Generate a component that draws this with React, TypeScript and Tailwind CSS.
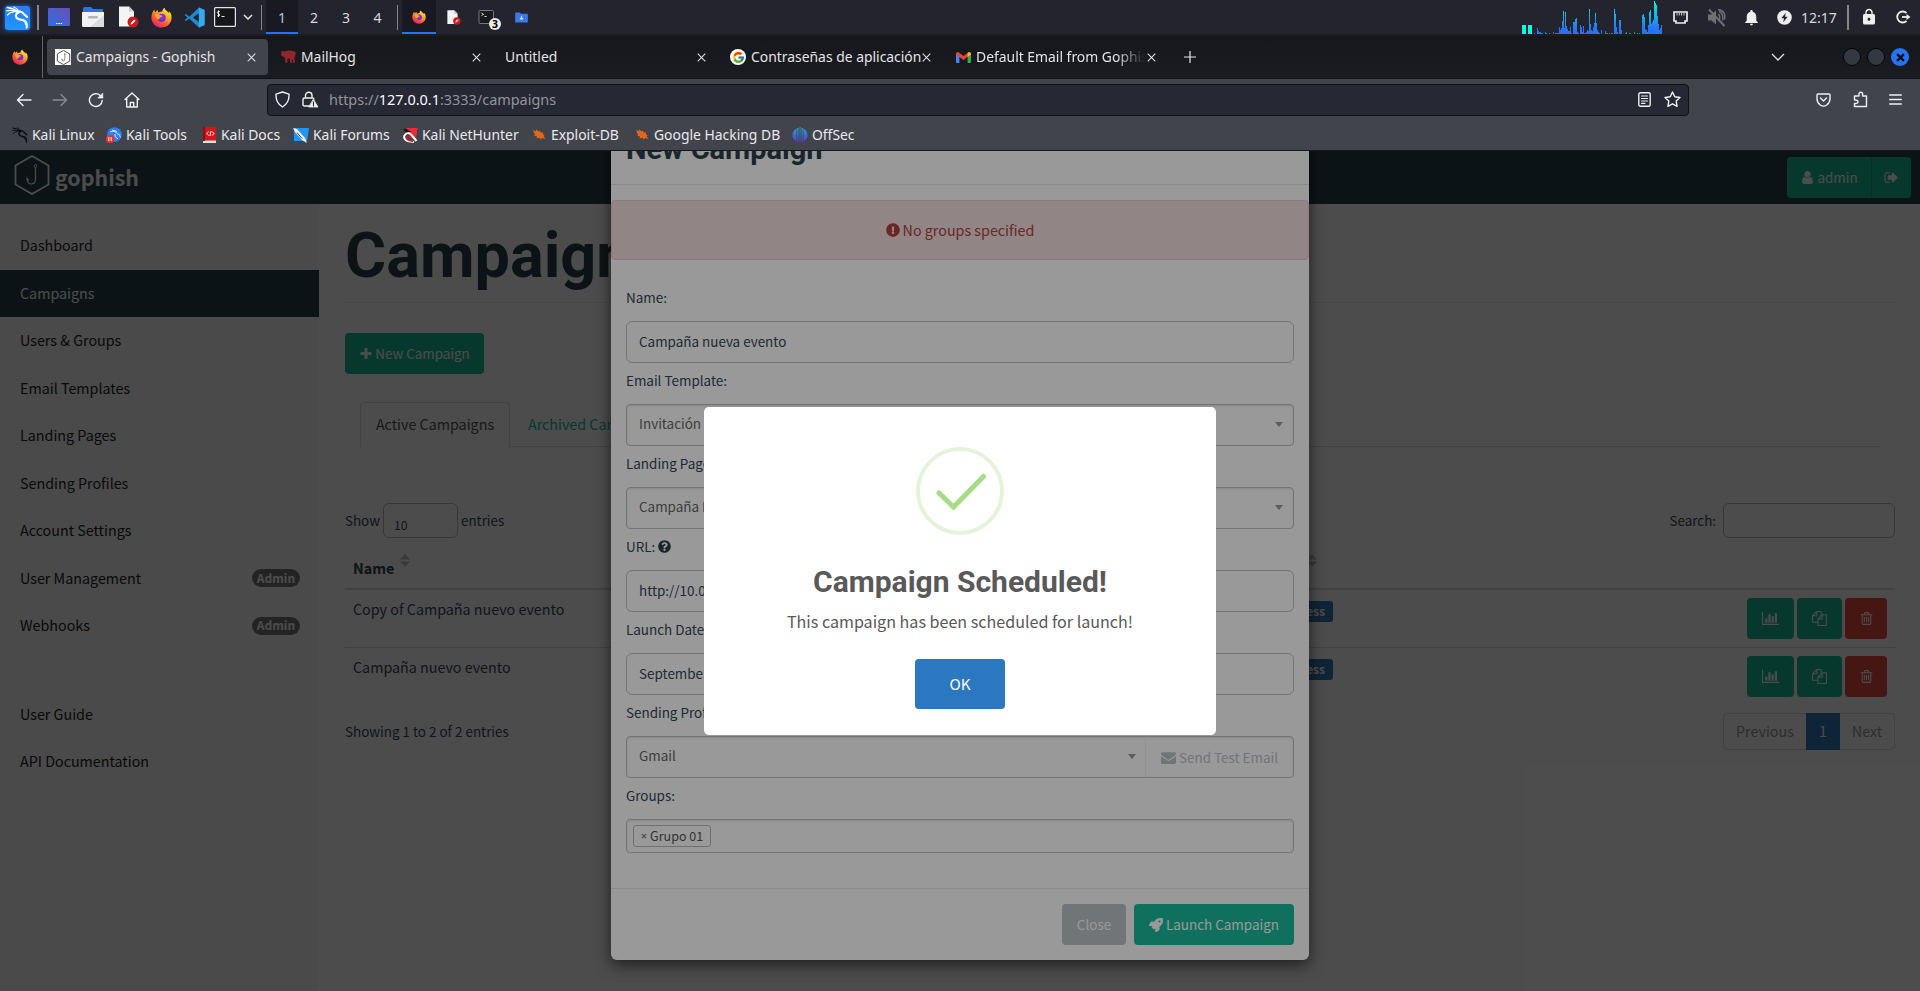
import type { ReactNode } from "react";
import { FcGoogle } from "react-icons/fc";
import { FaExclamationCircle, FaQuestionCircle, FaRocket } from "react-icons/fa";
import { MdNotifications, MdLock } from "react-icons/md";

const icons = {
  plus: "M1600 736v192q0 40-28 68t-68 28h-416v416q0 40-28 68t-68 28h-192q-40 0-68-28t-28-68v-416h-416q-40 0-68-28t-28-68v-192q0-40 28-68t68-28h416v-416q0-40 28-68t68-28h192q40 0 68 28t28 68v416h416q40 0 68 28t28 68z",
  chart: "M640 896v512h-256v-512h256zm384-512v1024h-256v-1024h256zm1024 1152v128h-2048v-1536h128v1408h1920zm-640-896v768h-256v-768h256zm384-384v1152h-256v-1152h256z",
  trash: "M704 736v576q0 14-9 23t-23 9h-64q-14 0-23-9t-9-23v-576q0-14 9-23t23-9h64q14 0 23 9t9 23zm256 0v576q0 14-9 23t-23 9h-64q-14 0-23-9t-9-23v-576q0-14 9-23t23-9h64q14 0 23 9t9 23zm256 0v576q0 14-9 23t-23 9h-64q-14 0-23-9t-9-23v-576q0-14 9-23t23-9h64q14 0 23 9t9 23zm128 724v-948h-896v948q0 22 7 40.5t14.5 27 10.5 8.5h832q3 0 10.5-8.5t14.5-27 7-40.5zm-672-1076h448l-48-117q-7-9-17-11h-317q-10 2-17 11zm928 32v64q0 14-9 23t-23 9h-96v948q0 83-47 143.5t-113 60.5h-832q-66 0-113-58.5t-47-141.5v-952h-96q-14 0-23-9t-9-23v-64q0-14 9-23t23-9h309l70-167q15-37 54-63t79-26h320q40 0 79 26t54 63l70 167h309q14 0 23 9t9 23z",
  files: "M1696 384q40 0 68 28t28 68v1216q0 40-28 68t-68 28h-960q-40 0-68-28t-28-68v-288h-544q-40 0-68-28t-28-68v-672q0-40 20-88t48-76l408-408q28-28 76-48t88-20h416q40 0 68 28t28 68v328q68-40 128-40h416zm-544 213l-299 299h299v-299zm-640-384l-299 299h299v-299zm196 647l316-316v-416h-384v416q0 40-28 68t-68 28h-416v640h512v-256q0-40 20-88t48-76zm956 804v-1152h-384v416q0 40-28 68t-68 28h-416v640h896z",
  signOut: "M704 1440q0 4 1 20t.5 26.5-3 23.5-10 19.5-20.5 6.5h-320q-119 0-203.5-84.5t-84.5-203.5v-704q0-119 84.5-203.5t203.5-84.5h320q13 0 22.5 9.5t9.5 22.5q0 4 1 20t.5 26.5-3 23.5-10 19.5-20.5 6.5h-320q-66 0-113 47t-47 113v704q0 66 47 113t113 47h312l11.5 1 11.5 3 8 5.5 7 9 2 13.5zm928-544q0 26-19 45l-544 544q-19 19-45 19t-45-19-19-45v-288h-448q-26 0-45-19t-19-45v-384q0-26 19-45t45-19h448v-288q0-26 19-45t45-19 45 19l544 544q19 19 19 45z",
  user: "M1536 1399q0 109-62.5 187t-150.5 78h-854q-88 0-150.5-78t-62.5-187q0-85 8.5-160.5t31.5-152 58.5-131 94-89 134.5-34.5q131 128 313 128t313-128q76 0 134.5 34.5t94 89 58.5 131 31.5 152 8.5 160.5zm-256-887q0 159-112.5 271.5t-271.5 112.5-271.5-112.5-112.5-271.5 112.5-271.5 271.5-112.5 271.5 112.5 112.5 271.5z",
  envelope: "M1792 710v794q0 66-47 113t-113 47h-1472q-66 0-113-47t-47-113v-794q44 49 101 87 362 246 497 345 57 42 92.5 65.5t94.5 48 110 24.5h2q51 0 110-24.5t94.5-48 92.5-65.5q170-123 498-345 57-39 100-87zm0-294q0 79-49 151t-122 123q-376 261-468 325-10 7-42.5 31t-54 38.5-52 32.5-57.5 27-50 9h-2q-23 0-50-9t-57.5-27-52-32.5-54-38.5-42.5-31q-91-64-262-182.5t-205-142.5q-62-42-117-115.5t-55-136.5q0-78 41.5-130t118.5-52h1472q65 0 112.5 47t47.5 113z",
};

function Glyph({ d, size, wide }: { d: string; size: number; wide?: boolean }) {
  return (
    <svg width={wide ? (size * 2048) / 1792 : size} height={size} viewBox={wide ? "0 0 2048 1792" : "0 0 1792 1792"} fill="currentColor" className="shrink-0">
      <path d={d} />
    </svg>
  );
}

function Dragon({ size, color }: { size: number; color: string }) {
  return (
    <svg width={size} height={size} viewBox="0 0 24 24" fill="none" stroke={color} strokeLinecap="round" strokeLinejoin="round" className="shrink-0">
      <path d="M1.500 1.500Q7 2 12 5.500" strokeWidth="1.500" />
      <path d="M0.800 5Q6 3.800 12 6" strokeWidth="1.300" />
      <path d="M1.500 9.500Q5 5.600 11 6" strokeWidth="1.300" />
      <path d="M8 1Q11 2 13 5" strokeWidth="1.200" />
      <path d="M11 5.500Q17 5 19.500 9.500L22 11.500" strokeWidth="2" />
      <path d="M19 9Q21 8.500 22.300 11.500" strokeWidth="1.200" />
      <path d="M13.500 6.500Q9.500 8 10.500 11.500 11.800 14 16 14.300 20.800 15 21.500 18.500 21.800 20.500 21.500 22.500" strokeWidth="2.100" />
      <path d="M17 14.500Q20.500 16 20.500 19" strokeWidth="1.500" />
    </svg>
  );
}

function Firefox({ size }: { size: number }) {
  return (
    <svg width={size} height={size} viewBox="0 0 24 24">
      <defs>
        <linearGradient id="fxBody" x1="0.85" y1="0" x2="0.2" y2="1">
          <stop offset="0" stopColor="#fff14f" />
          <stop offset="0.35" stopColor="#ffae26" />
          <stop offset="0.65" stopColor="#ff5a36" />
          <stop offset="1" stopColor="#e8186f" />
        </linearGradient>
        <radialGradient id="fxCore" cx="0.5" cy="0.4" r="0.6">
          <stop offset="0" stopColor="#8a3ffc" />
          <stop offset="1" stopColor="#5b2bb8" />
        </radialGradient>
      </defs>
      <path d="M15.500 0.800c-2.200 1.300-2.600 3.100-2.700 4.500-1.600-.1-3 .3-4.200 1.100C7.700 5.700 7.600 4.600 7.900 3.200 6.500 3.900 5.500 5 4.800 6 4 5.200 4 3.900 4.200 2.900 2.200 4.400.6 7.500.5 11.600.3 18.300 5.500 23.500 12 23.500S23.500 18.500 23.500 12c0-3.300-1.200-5.700-3-7.300.3 1 .3 1.900.2 2.500C19.600 4.600 16 4.300 15.500.8Z" fill="url(#fxBody)" />
      <circle cx="12.200" cy="12.400" r="4.600" fill="url(#fxCore)" />
      <path d="M4.500 8.500c2.500-1.200 5-.6 6.200 1 1.300.1 2 .2 2.400.6-.4 1-1.500 1.400-2.600 1.900-.9.400-1.100 1.400-.5 2.400-2.500-.1-5-1.900-5.500-5.900Z" fill="#ffa42e" />
    </svg>
  );
}

function VsCode() {
  return (
    <svg width="21" height="21" viewBox="0 0 24 24">
      <path d="M17 0.500 23.500 3.500V20.500L17 23.500 6 13 2.300 15.900.6 15 4 12 .6 9 2.300 8.100 6 11Z" fill="#1e8ad0" />
      <path d="M17 7 10.200 12 17 17Z" fill="#22232b" />
      <path d="M17 0.500 23.500 3.500V20.500L17 23.500Z" fill="#37a9ee" />
    </svg>
  );
}

function BlockedDoc({ size }: { size: number }) {
  return (
    <svg width={size} height={size} viewBox="0 0 22 22">
      <path d="M2 0.500h10l5 5V20.500H2Z" fill="#f4f4f4" />
      <path d="M12 .5l5 5h-5Z" fill="#c9c9c9" />
      <circle cx="16" cy="16" r="5.500" fill="#cc1a1f" />
      <path d="M13.500 18.500 14 16.700 17.300 13.400 18.600 14.700 15.300 18Z" fill="#fff" />
    </svg>
  );
}

function Folder({ small }: { small?: boolean }) {
  return small ? (
    <svg width="13" height="11" viewBox="0 0 15 13">
      <path d="M0 1.500Q0 .5 1 .5h4.500L7 2h7q1 0 1 1v8q0 1.500-1 1.500H1q-1 0-1-1Z" fill="#3c78e8" />
      <path d="M7.500 4.500v4M5.700 7l1.800 2 1.800-2" stroke="#cfe0ff" strokeWidth="1.200" fill="none" />
    </svg>
  ) : (
    <svg width="22" height="20" viewBox="0 0 22 20">
      <path d="M1 1.500Q1 0 2.500 0H9l2 2h9q1 0 1 1v5H1Z" fill="#2f72e4" />
      <path d="M0 5h22v13.500q0 1.500-1.500 1.500h-19Q0 20 0 18.500Z" fill="#f2f2f4" />
      <path d="M22 8v12H8Z" fill="#dcdce0" />
      <rect x="6" y="9" width="10" height="2.500" rx="1.200" fill="#b4b4b8" />
    </svg>
  );
}

function Cell({ w, className = "", children }: { w: string; className?: string; children?: ReactNode }) {
  return <div className={`flex h-full shrink-0 items-center justify-center ${w} ${className}`}>{children}</div>;
}

function Separator() {
  return <div className="h-[25px] w-[1.500px] bg-[#85858a]" />;
}

const spikes: [number, number][] = [
  [102, 1], [111, 6], [114, 3], [117, 2], [120, 2], [123, 1], [126, 1], [135, 2], [138, 1], [147, 1], [159, 2], [165, 1], [168, 1], [171, 1], [174, 1], [177, 7],
  [180, 4], [183, 6], [186, 13], [189, 23], [192, 6], [195, 22], [198, 8], [201, 5], [204, 3], [207, 3], [210, 7], [213, 1], [219, 12], [222, 12], [225, 15], [228, 16],
  [231, 2], [234, 1], [240, 9], [243, 7], [246, 2], [249, 8], [252, 1], [255, 1], [258, 2], [261, 4], [264, 3], [267, 25], [270, 10], [273, 4], [276, 3], [279, 7],
  [282, 11], [285, 21], [288, 11], [291, 4], [294, 2], [297, 1], [303, 4], [315, 3], [318, 1], [321, 1], [327, 1], [333, 1], [336, 1], [342, 25], [345, 20], [348, 7], [351, 2], [357, 14],
  [360, 14], [363, 4], [375, 1], [378, 2], [387, 1], [390, 1], [402, 2], [411, 1], [417, 1], [426, 19], [429, 20], [432, 17], [435, 5], [438, 4], [441, 2], [444, 9], [447, 22], [450, 24],
  [453, 10], [456, 12], [459, 14], [462, 33], [465, 31], [468, 29], [471, 18], [474, 10], [477, 4], [480, 6], [483, 9],
];

function SystemPanel() {
  return (
    <div className="flex h-[34px] items-center bg-[#23242d] font-['Noto_Sans',sans-serif] text-[14px] text-[#d5d8de]">
      <Cell w="w-[34px]" className="pt-px">
        <div className="flex h-[24px] w-[25px] items-center justify-center rounded-[3px] bg-gradient-to-b from-[#2a7bff] to-[#2196ff] shadow-[0_0_4px_#1a6cff]">
          <Dragon size={23} color="#fff" />
        </div>
      </Cell>
      <Cell w="w-[8px]"><Separator /></Cell>
      <Cell w="w-[34px]">
        <svg width="22" height="18" viewBox="0 0 22 18">
          <defs>
            <linearGradient id="desk" x1="0" y1="1" x2="1" y2="0">
              <stop offset="0" stopColor="#2f6fe0" />
              <stop offset="1" stopColor="#6a4fb4" />
            </linearGradient>
          </defs>
          <rect width="22" height="18" rx="1" fill="url(#desk)" />
          <path d="M8 15.500h1.500M10.300 15.500H11.800M12.600 15.500h1.500" stroke="#fff" strokeWidth="1.200" />
        </svg>
      </Cell>
      <Cell w="w-[34px]"><Folder /></Cell>
      <Cell w="w-[36px]"><BlockedDoc size={22} /></Cell>
      <Cell w="w-[31px]"><Firefox size={21} /></Cell>
      <Cell w="w-[34px]"><VsCode /></Cell>
      <Cell w="w-[28px]">
        <svg width="22" height="20" viewBox="0 0 22 20">
          <rect x="0.600" y="0.600" width="20.800" height="18.800" rx="1" fill="#16161a" stroke="#e4e4e4" strokeWidth="1.200" />
          <path d="M5.800 4.500Q3.300 4 3.300 5.600 3.500 6.600 4.600 6.800 6 7.200 5.800 8.200 5.300 9.300 3.200 8.800M4.500 3.300V10M7.500 9.500h3" stroke="#fff" strokeWidth="0.900" fill="none" />
        </svg>
      </Cell>
      <Cell w="w-[18px]">
        <svg width="10" height="6" viewBox="0 0 10 6"><path d="M1 1l4 4 4-4" stroke="#e6e6e6" strokeWidth="1.500" fill="none" /></svg>
      </Cell>
      <Cell w="w-[9px]"><Separator /></Cell>
      <Cell w="w-[32px]" className="border-b-2 border-[#2673f5] bg-[#191a21] pt-[2px] text-[#a9cbee]">1</Cell>
      <Cell w="w-[32px]">2</Cell>
      <Cell w="w-[32px]">3</Cell>
      <Cell w="w-[31px]">4</Cell>
      <Cell w="w-[9px]"><Separator /></Cell>
      <Cell w="w-[34px]" className="border-b-2 border-[#2673f5] bg-[#191a21] pt-[2px]"><Firefox size={14} /></Cell>
      <Cell w="w-[35px]"><BlockedDoc size={15} /></Cell>
      <Cell w="w-[34px]" className="relative">
        <svg width="26" height="26" viewBox="0 0 26 26">
          <rect x="4" y="6.500" width="14.500" height="13" rx="1" fill="#1a1a1e" stroke="#77777b" />
          <path d="M6.500 9 8.500 10.300 6.500 11.600M9.500 12.500h2" stroke="#ddd" strokeWidth="1" fill="none" />
          <circle cx="20" cy="20" r="6" fill="#ededed" />
        </svg>
        <span className="absolute top-[17px] left-[21px] text-[10.500px] leading-[14px] font-bold text-black">3</span>
      </Cell>
      <Cell w="w-[32px]"><Folder small /></Cell>
      <div className="flex-1" />
      <Cell w="w-[146px]" className="items-end!">
        <svg width="146" height="34" viewBox="0 0 146 34">
          <defs>
            <linearGradient id="cpu" gradientUnits="userSpaceOnUse" x1="0" y1="0" x2="0" y2="34">
              <stop offset="0" stopColor="#06fbd9" />
              <stop offset="0.850" stopColor="#2673f5" />
            </linearGradient>
          </defs>
          <path d="M4 25h4v9H4ZM10 25h4v9h-4Z" fill="#06fbe0" />
          {spikes.map(([x, h]) => (
            <rect key={x} x={x / 3 - 18} y={34 - h} width="1" height={h} fill="url(#cpu)" shapeRendering="crispEdges" />
          ))}
        </svg>
      </Cell>
      <Cell w="w-[33px]">
        <svg width="15" height="13" viewBox="0 0 15 13">
          <path d="M1 1h13v9h-2v2H3v-2H1Z" fill="none" stroke="#eee" strokeWidth="1.700" />
          <path d="M4 2v2.500M6.300 2v2.500M8.600 2v2.500M11 2v2.500" stroke="#ddd" strokeWidth="0.900" />
        </svg>
      </Cell>
      <Cell w="w-[38px]">
        <svg width="19" height="19" viewBox="0 0 19 19" stroke="#6f7074" fill="none" strokeWidth="1.500">
          <path d="M1 6.500h3.500L9 2.500v14L4.500 12.500H1Z" fill="#6f7074" stroke="none" />
          <path d="M11.500 6q2.500 3.500 0 7M12 3.500q5 2 3.500 9M11 1.500q8.500 1.500 6.500 10" />
          <path d="M2 1.500 17.500 18" strokeWidth="2" />
        </svg>
      </Cell>
      <Cell w="w-[33px]"><MdNotifications size={19} color="#eee" /></Cell>
      <Cell w="w-[33px]">
        <svg width="15" height="15" viewBox="0 0 15 15">
          <circle cx="7.500" cy="7.500" r="7.300" fill="#eee" />
          <path d="M8.800 2.800 4.300 8.300H7L6.200 12.300 10.700 6.800H8Z" fill="#23242d" />
        </svg>
      </Cell>
      <Cell w="w-[36px]">12:17</Cell>
      <Cell w="w-[22px]"><Separator /></Cell>
      <Cell w="w-[20px]"><MdLock size={18} color="#eee" /></Cell>
      <Cell w="w-[41px]" className="pl-[8px]">
        <svg width="15" height="14" viewBox="0 0 15 14" fill="none" stroke="#ececec" strokeWidth="1.800">
          <path d="M10.500 3A5.500 5.500 0 1 0 10.500 11" />
          <path d="M6 7h5" />
          <path d="M10.500 4 14.500 7 10.500 10Z" fill="#ececec" stroke="none" />
        </svg>
      </Cell>
    </div>
  );
}

function Hexagon({ className, box }: { className: string; box: string }) {
  return (
    <svg className={className} viewBox={box} fill="none" stroke="currentColor" strokeWidth="1.800">
      <path d="M17.500 1 34 10.500V29.500L17.500 39 1 29.500V10.500Z" />
      <circle cx="21" cy="10.800" r="1.400" strokeWidth="1" />
      <path d="M21 12.200V24q0 5-4.300 5-3.900 0-4.200-5.500l1.800 2" strokeWidth="1.200" />
    </svg>
  );
}

function Close() {
  return (
    <svg width="9" height="9" viewBox="0 0 9 9" className="shrink-0"><path d="M.7.7l7.600 7.600M8.300.7L.7 8.300" stroke="#dcdde0" strokeWidth="1.100" /></svg>
  );
}

function BrowserTab({ title, icon, active, fade }: { title: string; icon?: ReactNode; active?: boolean; fade?: boolean }) {
  return (
    <div className="flex h-full w-[225px] shrink-0 items-center px-[2px]">
      <div className={`flex h-[36px] w-full items-center rounded-[4px] pl-[8px] ${active ? "bg-[#42444c]" : ""}`}>
        {icon && <div className="mr-[5px] flex w-[16px] shrink-0 justify-center">{icon}</div>}
        <div className={`min-w-0 flex-1 overflow-hidden pt-px whitespace-nowrap ${fade ? "mr-[2px] [mask-image:linear-gradient(to_right,black_83%,transparent_100%)]" : ""}`}>{title}</div>
        <Close />
        <div className="w-[12px]" />
      </div>
    </div>
  );
}

function TabStrip() {
  return (
    <div className="flex h-[45px] items-center border-t-2 border-b border-t-[#1c1d22] border-b-[#111216] bg-gradient-to-b from-[#16171b] to-[#1b1c21] font-['Noto_Sans',sans-serif] text-[13.900px] text-[#e2e3e6]">
      <Cell w="w-[43px]" className="border-r border-[#66676c] pr-[2px]"><Firefox size={16} /></Cell>
      <div className="flex h-full items-center pl-[2px]">
        <BrowserTab active title="Campaigns - Gophish" icon={<div className="flex size-[16px] items-center justify-center bg-white text-black"><Hexagon className="size-[15px]" box="-2 0 39 40" /></div>} />
        <BrowserTab
          title="MailHog"
          icon={
            <svg width="15" height="14" viewBox="0 0 15 14" fill="#93262c">
              <path d="M0 4.200.6 2 1.200.3 2.600 1.800 4 1.300Q8-.3 12 1l2 .5.8 1.500-.6 3-.7 1.800.4 5.200h-1.800l-.3-3.500-1 .1.2 3.400H9.200L8.800 8.600H6.500L6.200 13H4.500L4 8.200 2.300 6.500.8 6.300Z" />
            </svg>
          }
        />
        <BrowserTab title="Untitled" />
        <BrowserTab title="Contraseñas de aplicación" icon={<div className="flex size-[16px] items-center justify-center rounded-full bg-white"><FcGoogle size={13} /></div>} />
        <BrowserTab
          fade
          title="Default Email from Gophish"
          icon={
            <svg width="15" height="11" viewBox="0 0 15 11">
              <path d="M0 1.500V10q0 1 1 1h2.400V4Z" fill="#4285f4" />
              <path d="M15 1.500V10q0 1-1 1h-2.400V4Z" fill="#34a853" />
              <path d="M0 1.700Q.5-.5 2.500.3L7.500 4l5-3.700v3.600L7.500 8 3.400 4.900Z" fill="#ea4335" />
              <path d="M15 1.700Q14.500-.5 12.500.3l-.9.700V5L15 2.500Z" fill="#fbbc04" />
            </svg>
          }
        />
      </div>
      <svg width="12" height="12" viewBox="0 0 12 12" className="ml-[14px]"><path d="M6 0v12M0 6h12" stroke="#e8e8ea" strokeWidth="1.200" /></svg>
      <div className="flex-1" />
      <svg width="14" height="8" viewBox="0 0 14 8" className="mr-[58px]"><path d="M1 1l6 6 6-6" stroke="#e0e0e3" strokeWidth="1.300" fill="none" /></svg>
      <div className="mr-[11px] flex gap-[6px]">
        <div className="size-[18px] rounded-full border border-[#050507] bg-[#343843]" />
        <div className="size-[18px] rounded-full border border-[#050507] bg-[#343843]" />
        <div className="flex size-[18px] items-center justify-center rounded-full bg-[#2673f5]">
          <svg width="9" height="9" viewBox="0 0 8 8"><path d="M1 1l6 6M7 1L1 7" stroke="#0c0d12" strokeWidth="2" /></svg>
        </div>
      </div>
    </div>
  );
}

function NavBar() {
  const line = { fill: "none", stroke: "#f0f0f2", strokeWidth: 1.4, strokeLinejoin: "round" as const, strokeLinecap: "round" as const };
  return (
    <div className="flex h-[41px] items-center bg-[#42444c] font-['Noto_Sans',sans-serif] text-[14.450px]">
      <div className="flex w-[267px] items-center pl-[16px]">
        <svg width="16" height="16" viewBox="0 0 16 16" {...line}><path d="M15 8H1.500M7 2.500 1.500 8 7 13.500" /></svg>
        <svg width="16" height="16" viewBox="0 0 16 16" {...line} stroke="#898a8f" className="ml-[20px]"><path d="M1 8h13.500M9 2.500 14.500 8 9 13.500" /></svg>
        <svg width="16" height="16" viewBox="0 0 16 16" {...line} className="ml-[20px]"><path d="M14.200 8.500A6.400 6.400 0 1 1 12.500 3.700L14.500 5.500" /><path d="M14.700 1.500v4.500h-4.500Z" fill="#f0f0f2" strokeWidth="0.800" /></svg>
        <svg width="16" height="16" viewBox="0 0 16 16" {...line} className="ml-[20px]"><path d="M1 7.500 8 1l7 6.500M2.700 6.500V15h10.600V6.500M6.300 15v-4.500h3.400V15" /></svg>
      </div>
      <div className="flex h-[32px] w-[1422px] items-center rounded-[4px] border border-[#0f1014] bg-[#262833] pl-[7px]">
        <svg width="15" height="17" viewBox="0 0 15 17" {...line}><path d="M7.500 1 14 3.200Q14.500 12 7.500 16 .5 12 1 3.200Z" /></svg>
        <svg width="17" height="17" viewBox="0 0 17 17" {...line} className="ml-[12px]">
          <path d="M3.500 7V4.500a3 3 0 0 1 6.500 0V7M7 15H2.500Q1 15 1 13.500v-5Q1 7 2.500 7h8q1.500 0 1.500 1" />
          <path d="M11.500 8.500 16 16H7Z" fill="#f0f0f2" strokeWidth="0.800" />
          <path d="M11.500 11v2.400M11.500 14.600v.3" stroke="#262833" strokeWidth="1.200" />
        </svg>
        <div className="ml-[10px] flex-1 whitespace-nowrap text-[#93949b]">https://<span className="text-[#fbfbfe]">127.0.0.1</span>:3333/campaigns</div>
        <svg width="13" height="15" viewBox="0 0 13 15" {...line}><rect x="0.800" y="0.800" width="11.400" height="13.400" rx="1.500" /><path d="M3.500 4h6M3.500 6.500h6M3.500 9h6M3.500 11.300h3.500" strokeWidth="1.200" /></svg>
        <svg width="17" height="17" viewBox="0 0 17 17" {...line} className="mr-[7px] ml-[13px]"><path d="M8.500 1l2.300 4.800 5.200.7-3.800 3.600.9 5.200-4.600-2.500-4.600 2.500.9-5.200L1 6.500l5.200-.7Z" /></svg>
      </div>
      <div className="flex-1" />
      <svg width="15" height="14" viewBox="0 0 15 14" {...line}><path d="M2 1h11q1 0 1 1v4q0 3.500-3.300 6Q7.500 14.300 4.300 12 1 9.500 1 6V2q0-1 1-1ZM4.500 5l3 3 3-3" /></svg>
      <svg width="15" height="17" viewBox="0 0 15 17" {...line} className="ml-[22px]"><path d="M6 5V3a1.800 1.800 0 0 1 3.600 0v2H13.500v10.500H1.500V12.500q3.500.3 3.500-1.700 0-2.100-3.500-1.800V5Z" /></svg>
      <svg width="13" height="11" viewBox="0 0 13 11" {...line} className="mr-[18px] ml-[21px]"><path d="M.7 1h11.600M.7 5.500h11.600M.7 10h11.600" /></svg>
    </div>
  );
}

function BugIcon() {
  return (
    <svg width="14" height="13" viewBox="0 0 15 13" fill="#e8651c">
      <path d="M1 1.500 4 3 5 1l1.500 2L9 2.800l.5 1.700L12 4l-.5 2 2 1.500-1 1 2 3-3.500-1.500L9.500 12l-1.200-2L5 10.500l.3-2L2.500 8l1-2L1 5l1.500-.5Z" />
    </svg>
  );
}

const bookmarks: { label: string; w: string; icon: ReactNode }[] = [
  { label: "Kali Linux", w: "w-[94px]", icon: <Dragon size={16} color="#0c0c0e" /> },
  {
    label: "Kali Tools",
    w: "w-[95px]",
    icon: (
      <svg width="16" height="16" viewBox="0 0 16 16">
        <circle cx="8.500" cy="7.500" r="7.300" fill="#2f7df0" />
        <path d="M4 5q5-2 7 1.500 3 .5 3.500 4M6 3l5 1.500M9 7q-1 3 3 5" stroke="#dbe9ff" fill="none" />
        <rect y="8" width="8" height="8" rx="3" fill="#e5342d" />
        <path d="M2.800 10v4M5.200 10v4" stroke="#fff" />
      </svg>
    ),
  },
  {
    label: "Kali Docs",
    w: "w-[92px]",
    icon: (
      <svg width="13" height="16" viewBox="0 0 13 16">
        <rect width="13" height="13.500" fill="#d4151b" />
        <rect y="13.500" width="13" height="2.500" fill="#ddd" />
        <path d="M0 0h2v14H0Z" fill="#8f0d12" />
        <path d="M5.500 4.500 3.800 6.500l1.700 2M9.200 4.500l1.700 2-1.700 2M8 4 6.800 9" stroke="#fff" fill="none" />
      </svg>
    ),
  },
  {
    label: "Kali Forums",
    w: "w-[109px]",
    icon: (
      <svg width="16" height="16" viewBox="0 0 16 16">
        <path d="M1 1h15l-2 13H1Z" fill="#2196f8" />
        <path d="M0 1 4 2l8 9 2 5-5-3-7-8Z" fill="#f4f4f4" />
        <path d="M4 5.500l5 6" stroke="#444" />
      </svg>
    ),
  },
  {
    label: "Kali NetHunter",
    w: "w-[129px]",
    icon: (
      <svg width="16" height="16" viewBox="0 0 16 16">
        <path d="M3 1h12.500L14 11 9 6Z" fill="#ee2a3a" />
        <path d="M1 2 4 1.500 9 5 5 6.500Z" fill="#17181c" />
        <path d="M12 15 5.500 14Q1 12 2.500 8.500 5.500 4 9.500 8L14.500 14" stroke="#fff" strokeWidth="2" fill="none" />
        <path d="M11 14.500 6.500 13Q3.500 11 5 9.500 7 8.500 9 11" stroke="#c3202c" strokeWidth="1.800" fill="none" />
      </svg>
    ),
  },
  { label: "Exploit-DB", w: "w-[103px]", icon: <BugIcon /> },
  { label: "Google Hacking DB", w: "w-[158px]", icon: <BugIcon /> },
  {
    label: "OffSec",
    w: "w-[80px]",
    icon: (
      <svg width="16" height="16" viewBox="0 0 16 16">
        <defs>
          <linearGradient id="off" gradientUnits="userSpaceOnUse" x1="0" y1="0" x2="0" y2="16">
            <stop offset="0" stopColor="#1fb0c9" />
            <stop offset="1" stopColor="#5a2fd0" />
          </linearGradient>
        </defs>
        <path d="M4.500 1.500v13Q.5 12 .5 8t4-6.500ZM5.200 1h1.300v14H5.200ZM7.600 0h.9v16h-.9ZM11.500 1.500v13q4-2.500 4-6.500t-4-6.500ZM9.600 1h1.200v14H9.600Z" fill="url(#off)" />
      </svg>
    ),
  },
];

function BookmarkBar() {
  return (
    <div className="flex h-[31px] items-center border-b border-[#17181c] bg-[#42444c] pl-[12px] font-['Noto_Sans',sans-serif] text-[13.900px] text-[#e8e9ec]">
      {bookmarks.map((b) => (
        <div key={b.label} className={`flex shrink-0 items-center gap-[4px] whitespace-nowrap ${b.w}`}>
          <div className="flex w-[16px] shrink-0 justify-center">{b.icon}</div>
          <span>{b.label}</span>
        </div>
      ))}
    </div>
  );
}

const menu: { label: string; admin?: boolean; active?: boolean; gap?: boolean }[] = [
  { label: "Dashboard" },
  { label: "Campaigns", active: true },
  { label: "Users & Groups" },
  { label: "Email Templates" },
  { label: "Landing Pages" },
  { label: "Sending Profiles" },
  { label: "Account Settings" },
  { label: "User Management", admin: true },
  { label: "Webhooks", admin: true },
  { label: "User Guide", gap: true },
  { label: "API Documentation" },
];

function SideMenu() {
  return (
    <div className="w-[319px] shrink-0 bg-[#f9f9f9] pt-[18.400px]">
      {menu.map((m) => (
        <div key={m.label} className={`flex h-[47.500px] items-center justify-between pr-[19px] pb-[2px] pl-[20px] ${m.active ? "bg-[#2a424b] text-white" : "text-[#222]"} ${m.gap ? "mt-[41px]" : ""}`}>
          <span>{m.label}</span>
          {m.admin && <span className="mt-px flex h-[18px] w-[48px] items-center justify-center rounded-full bg-[#777] pb-px text-[12px] font-bold text-white">Admin</span>}
        </div>
      ))}
    </div>
  );
}

function SortArrows() {
  return (
    <svg width="10" height="13" viewBox="0 0 10 13" fill="#c4c4c4"><path d="M5 0l5 5.500H0ZM5 13l5-5.500H0Z" /></svg>
  );
}

function CampaignRow({ name, last }: { name: string; last?: boolean }) {
  return (
    <div className={`flex items-start ${last ? "h-[57px]" : "h-[58px] border-b border-[#ddd]"}`}>
      <div className="w-[886px] pt-[9px] pl-[8px]">{name}</div>
      <div className="flex w-[102px] justify-end pt-[11px]">
        <span className="flex h-[21px] w-[62px] items-center justify-end rounded-[3px] bg-[#337ab7] pr-[8px] pb-px text-[12px] font-bold text-white">Success</span>
      </div>
      <div className="ml-auto flex gap-[3px] pt-[8px] pr-[8px] text-white">
        <div className="flex h-[41px] w-[47px] items-center justify-center rounded-[4px] bg-[#1abc9c]"><Glyph d={icons.chart} size={15} wide /></div>
        <div className="flex h-[41px] w-[45px] items-center justify-center rounded-[4px] bg-[#1abc9c]"><Glyph d={icons.files} size={15} /></div>
        <div className="flex h-[41px] w-[42px] items-center justify-center rounded-[4px] bg-[#e74c3c]"><Glyph d={icons.trash} size={15} /></div>
      </div>
    </div>
  );
}

function CampaignsPage() {
  return (
    <div className="flex h-full flex-col bg-white text-[14.300px] leading-[20px] text-[#34495e]">
      <div className="flex h-[53px] shrink-0 items-center justify-between bg-[#2a424b] pr-[9px] pl-[14px] text-white">
        <div className="flex items-center">
          <Hexagon className="mb-[5px] h-[40px] w-[36px]" box="0 0 35 40" />
          <span className="ml-[5px] pb-px text-[21.400px] font-bold">gophish</span>
        </div>
        <div className="flex h-[41px] rounded-[4px] bg-[#1abc9c] text-[13.400px]">
          <div className="flex w-[85px] items-center justify-center gap-[2px] border-r border-[#16a085]"><Glyph d={icons.user} size={15} /><span className="pb-[2px]">admin</span></div>
          <div className="flex w-[39px] items-center justify-center"><Glyph d={icons.signOut} size={15} /></div>
        </div>
      </div>
      <div className="flex min-h-0 flex-1">
        <SideMenu />
        <div className="flex-1 pr-[25px] pl-[26px]">
          <h1 className="h-[99px] border-b border-[#eee] pt-[17px] font-['Roboto',sans-serif] text-[63px] leading-[69px] font-bold text-[#2a424b]">Campaigns</h1>
          <div className="mt-[30px] flex h-[41px] w-[139px] items-center justify-center gap-[2px] rounded-[4px] bg-[#1abc9c] text-[13.400px] text-white"><Glyph d={icons.plus} size={14} /><span className="pb-[2px]">New Campaign</span></div>
          <div className="mx-[15px] mt-[28px] flex h-[45px] items-stretch">
            <div className="flex w-[150px] items-center justify-center rounded-t-[4px] border border-b-0 border-[#ddd] pb-[2px] text-[#555]">Active Campaigns</div>
            <div className="flex flex-1 items-center border-b border-[#ddd] pb-px pl-[18px] text-[#1abc9c]">Archived Campaigns</div>
          </div>
          <div className="mt-[56px] flex h-[35px] items-center text-[13.400px]">
            <span className="w-[38px] pb-[2px]">Show</span>
            <div className="h-[35px] w-[75px] rounded-[6px] border border-[#bbb] pt-[11px] pl-[10px] text-[12.200px]">10</div>
            <span className="ml-[3px] pb-[2px]">entries</span>
            <span className="mr-[7px] ml-auto pb-[2px]">Search:</span>
            <div className="h-[35px] w-[172px] rounded-[6px] border border-[#bbb]" />
          </div>
          <div className="flex h-[52px] items-start border-b-2 border-[#ddd] pt-[16px]">
            <div className="flex w-[962px] items-start pl-[8px]"><span className="mr-[6px] pt-[4px] font-bold text-[#2a424b]">Name</span><SortArrows /></div>
            <SortArrows />
          </div>
          <CampaignRow name="Copy of Campaña nuevo evento" />
          <CampaignRow name="Campaña nuevo evento" last />
          <div className="mt-[8px] flex h-[37px] items-center justify-between">
            <span className="pb-[2px] text-[13.450px]">Showing 1 to 2 of 2 entries</span>
            <div className="flex h-[37px] w-[172px] rounded-[4px] border border-[#ddd] text-[#999]">
              <div className="flex w-[82px] items-center justify-center pb-[2px]">Previous</div>
              <div className="-my-px flex w-[34px] items-center justify-center bg-[#337ab7] pb-[2px] text-white">1</div>
              <div className="flex flex-1 items-center justify-center pb-[2px]">Next</div>
            </div>
          </div>
        </div>
      </div>
    </div>
  );
}

function Field({ label, children }: { label: ReactNode; children: ReactNode }) {
  return (
    <div>
      <div className="flex h-[41px] items-start gap-[3px] pt-[7px] whitespace-nowrap">{label}</div>
      {children}
    </div>
  );
}

function Caret() {
  return <svg width="8" height="5" viewBox="0 0 8 5" fill="#999" className="mt-[2px]"><path d="M0 0h8L4 5Z" /></svg>;
}

function Select({ value }: { value: string }) {
  return (
    <div className="flex h-[42px] items-center justify-between rounded-[4px] border border-[#bdc3c7] pr-[10px] pb-[4px] pl-[12px] text-[#666] shadow-[inset_0_1px_2px_rgba(0,0,0,0.12)]">
      <span>{value}</span>
      <Caret />
    </div>
  );
}

function Input({ value }: { value: string }) {
  return <div className="flex h-[42px] items-center rounded-[6px] border border-[#bdc3c7] pb-[3px] pl-[12px]">{value}</div>;
}

function CampaignModal() {
  return (
    <div className="absolute top-[-30px] left-[611px] w-[698px] rounded-[6px] bg-white text-[13.450px] leading-[20px] text-[#2f4858] shadow-[0_5px_15px_rgba(0,0,0,0.6)]">
      <div className="h-[64px] border-b border-[#e5e5e5] pt-[12px] pl-[15px] font-['Roboto',sans-serif] text-[29px] leading-[32px] font-bold text-[#2a424b]">New Campaign</div>
      <div className="mt-[15px] flex h-[60px] items-center justify-center gap-[3px] rounded-[4px] border border-[#ebccd1] bg-[#f2dede] text-[14.300px] text-[#b0413e]">
        <FaExclamationCircle size={14} />
        <span>No groups specified</span>
      </div>
      <div className="mt-[20px] px-[15px]">
        <Field label="Name:"><Input value="Campaña nueva evento" /></Field>
        <Field label="Email Template:"><Select value="Invitación" /></Field>
        <Field label="Landing Page:"><Select value="Campaña LP" /></Field>
        <Field label={<>URL: <FaQuestionCircle size={13} className="mt-[4px] text-[#2a424b]" /></>}><Input value="http://10.0.2.15" /></Field>
        <Field label="Launch Date"><Input value="September 8th 2024" /></Field>
        <Field label="Sending Profile:">
          <div className="flex h-[42px] rounded-[4px] border border-[#bdc3c7] shadow-[inset_0_1px_2px_rgba(0,0,0,0.12)]">
            <div className="flex flex-1 items-center justify-between border-r border-[#f2f2f2] pr-[9px] pb-[4px] pl-[12px] text-[#666]"><span>Gmail</span><Caret /></div>
            <div className="flex w-[147px] items-center justify-center gap-[3px] text-[#bdc3c7]"><Glyph d={icons.envelope} size={15} /><span className="pb-px">Send Test Email</span></div>
          </div>
        </Field>
        <Field label="Groups:">
          <div className="flex h-[34px] items-start rounded-[4px] border border-[#bdc3c7] p-[5px] pl-[6px] shadow-[inset_0_1px_2px_rgba(0,0,0,0.12)]">
            <div className="flex h-[22px] w-[78px] items-center justify-center gap-[3px] rounded-[3px] border border-[#bbb] text-[12.500px] text-[#555]"><span className="font-['Noto_Sans',sans-serif] text-[11px] font-bold text-[#888]">×</span><span>Grupo 01</span></div>
          </div>
        </Field>
      </div>
      <div className="mt-[35px] flex h-[72px] justify-end gap-[8px] border-t border-[#e5e5e5] px-[15px] pt-[15px] text-white">
        <div className="flex h-[41px] w-[64px] items-center justify-center rounded-[4px] bg-[#bdc3c7] pb-[2px]">Close</div>
        <div className="flex h-[41px] w-[160px] items-center justify-center gap-[3px] rounded-[4px] bg-[#1abc9c]"><FaRocket size={14} /><span className="pb-[2px]">Launch Campaign</span></div>
      </div>
    </div>
  );
}

function ScheduledDialog() {
  return (
    <div className="absolute top-[256px] left-[704px] flex h-[328px] w-[512px] flex-col items-center rounded-[5px] bg-white pt-[40px] text-[#595959]">
      <svg width="88" height="88" viewBox="0 0 88 88" fill="none">
        <circle cx="44" cy="44" r="42" stroke="#a5dc86" strokeOpacity="0.300" strokeWidth="4" />
        <path d="M23 46 37.500 60 67.500 29.500" stroke="#a5dc86" strokeWidth="5" strokeLinecap="round" />
      </svg>
      <div className="mt-[29px] font-['Roboto',sans-serif] text-[30px] leading-[36px] font-bold">Campaign Scheduled!</div>
      <div className="mt-[8px] text-[16.100px] leading-[26px]">This campaign has been scheduled for launch!</div>
      <div className="mt-[25px] flex h-[50px] w-[90px] items-center justify-center rounded-[4px] bg-[#2b77c0] pb-[2px] text-[15.200px] text-white">OK</div>
    </div>
  );
}

export default function App() {
  return (
    <div className="flex h-[991px] w-[1920px] flex-col overflow-hidden bg-[#23242d]">
      <SystemPanel />
      <TabStrip />
      <NavBar />
      <BookmarkBar />
      <div className="relative min-h-0 flex-1 overflow-hidden font-['Noto_Sans_CJK_SC',sans-serif]">
        <CampaignsPage />
        <div className="absolute inset-0 bg-black/50" />
        <CampaignModal />
        <div className="absolute inset-0 bg-black/40" />
        <ScheduledDialog />
      </div>
    </div>
  );
}
